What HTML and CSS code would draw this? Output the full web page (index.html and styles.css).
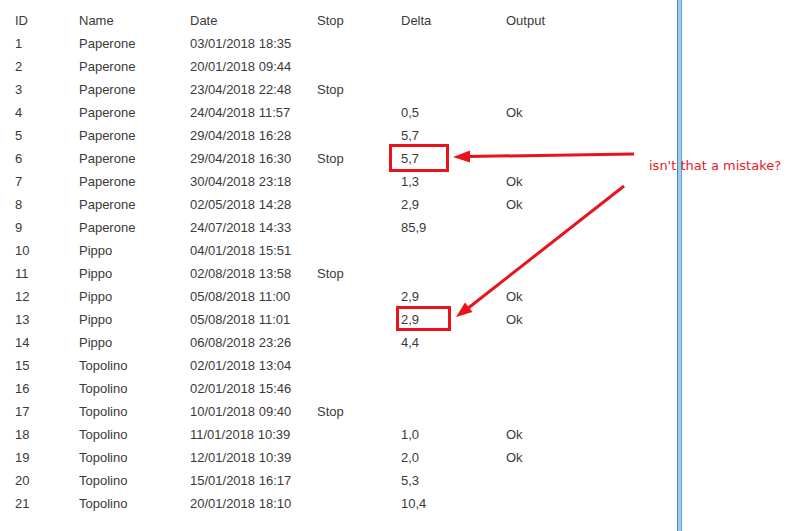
FILE: index.html
```html
<!DOCTYPE html>
<html>
<head>
<meta charset="utf-8">
<link rel="stylesheet" href="styles.css">
</head>
<body>
<div class="page">
  <div class="main">
    <div class="grid">
      <div class="h">ID</div><div class="h">Name</div><div class="h">Date</div><div class="h">Stop</div><div class="h">Delta</div><div class="h">Output</div>
      <div>1</div><div>Paperone</div><div>03/01/2018 18:35</div><div></div><div></div><div></div>
      <div>2</div><div>Paperone</div><div>20/01/2018 09:44</div><div></div><div></div><div></div>
      <div>3</div><div>Paperone</div><div>23/04/2018 22:48</div><div>Stop</div><div></div><div></div>
      <div>4</div><div>Paperone</div><div>24/04/2018 11:57</div><div></div><div>0,5</div><div>Ok</div>
      <div>5</div><div>Paperone</div><div>29/04/2018 16:28</div><div></div><div>5,7</div><div></div>
      <div>6</div><div>Paperone</div><div>29/04/2018 16:30</div><div>Stop</div><div>5,7</div><div></div>
      <div>7</div><div>Paperone</div><div>30/04/2018 23:18</div><div></div><div>1,3</div><div>Ok</div>
      <div>8</div><div>Paperone</div><div>02/05/2018 14:28</div><div></div><div>2,9</div><div>Ok</div>
      <div>9</div><div>Paperone</div><div>24/07/2018 14:33</div><div></div><div>85,9</div><div></div>
      <div>10</div><div>Pippo</div><div>04/01/2018 15:51</div><div></div><div></div><div></div>
      <div>11</div><div>Pippo</div><div>02/08/2018 13:58</div><div>Stop</div><div></div><div></div>
      <div>12</div><div>Pippo</div><div>05/08/2018 11:00</div><div></div><div>2,9</div><div>Ok</div>
      <div>13</div><div>Pippo</div><div>05/08/2018 11:01</div><div></div><div>2,9</div><div>Ok</div>
      <div>14</div><div>Pippo</div><div>06/08/2018 23:26</div><div></div><div>4,4</div><div></div>
      <div>15</div><div>Topolino</div><div>02/01/2018 13:04</div><div></div><div></div><div></div>
      <div>16</div><div>Topolino</div><div>02/01/2018 15:46</div><div></div><div></div><div></div>
      <div>17</div><div>Topolino</div><div>10/01/2018 09:40</div><div>Stop</div><div></div><div></div>
      <div>18</div><div>Topolino</div><div>11/01/2018 10:39</div><div></div><div>1,0</div><div>Ok</div>
      <div>19</div><div>Topolino</div><div>12/01/2018 10:39</div><div></div><div>2,0</div><div>Ok</div>
      <div>20</div><div>Topolino</div><div>15/01/2018 16:17</div><div></div><div>5,3</div><div></div>
      <div>21</div><div>Topolino</div><div>20/01/2018 18:10</div><div></div><div>10,4</div><div></div>
    </div>
  </div>
  <div class="divider"></div>
  <div class="side"></div>
</div>
<svg class="notes" width="805" height="531" viewBox="0 0 805 531" xmlns="http://www.w3.org/2000/svg">
  <rect x="390.5" y="145.5" width="57" height="25" fill="none" stroke="#e8141c" stroke-width="3"/>
  <rect x="397.5" y="307.5" width="52" height="22" fill="none" stroke="#e8141c" stroke-width="3"/>
  <line x1="634" y1="154" x2="468" y2="156.5" stroke="#e8141c" stroke-width="3"/>
  <polygon points="453,157 470,150.5 470,162.5" fill="#e8141c"/>
  <line x1="624" y1="186" x2="467" y2="309" stroke="#e8141c" stroke-width="3"/>
  <polygon points="456,317 472.5,312 465,302.5" fill="#e8141c"/>
  <text x="649" y="170" class="note">isn't that a mistake?</text>
</svg>
</body>
</html>
```

FILE: styles.css
```css
html, body {
  margin: 0;
  padding: 0;
  background: #ffffff;
}
.page {
  display: flex;
  width: 805px;
  height: 531px;
  overflow: hidden;
}
.main {
  width: 677px;
  padding: 9px 0 0 15px;
  box-sizing: border-box;
}
.grid {
  display: grid;
  grid-template-columns: 64px 111px 127px 84px 105px auto;
  grid-auto-rows: 23px;
  font-family: "Liberation Sans", Arial, sans-serif;
  font-size: 13px;
  line-height: 23px;
  color: #3a3a3a;
}
.divider {
  width: 3px;
  border-left: 1px solid #4f84b4;
  border-right: 1px solid #6fa3d2;
  background: #9ccbf0;
}
.side {
  flex: 1;
}
.notes {
  position: absolute;
  left: 0;
  top: 0;
  pointer-events: none;
}
.note {
  font-family: "DejaVu Sans", sans-serif;
  font-size: 13px;
  fill: #e31b23;
}
```
